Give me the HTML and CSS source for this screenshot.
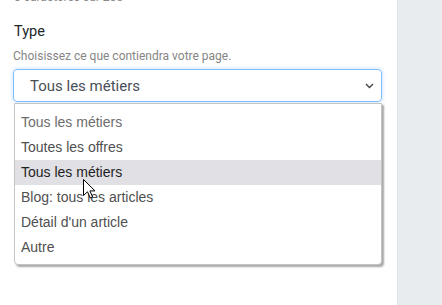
FILE: index.html
```html
<!DOCTYPE html>
<html>
<head>
  <title>Type de page</title>
  <link rel="stylesheet" href="styles.css">
</head>
<body>
  <div class="page">
    <div class="main">
      <p class="counter">0 caractères sur 255</p>
      <div class="form-group">
        <label class="field-label">Type</label>
        <p class="help">Choisissez ce que contiendra votre page.</p>
        <div class="select-wrap">
          <div class="select">
            <span>Tous les métiers</span>
            <svg class="chevron" width="9" height="6" viewBox="0 0 9 6">
              <path d="M1 1 L4.5 4.5 L8 1" fill="none" stroke="#444" stroke-width="1.4"/>
            </svg>
          </div>
          <ul class="options">
            <li class="muted">Tous les métiers</li>
            <li>Toutes les offres</li>
            <li class="hover">Tous les métiers</li>
            <li>Blog: tous les articles</li>
            <li>Détail d'un article</li>
            <li>Autre</li>
          </ul>
          <svg class="cursor" width="13" height="20" viewBox="0 0 13 20">
            <path d="M0.5 0.5 L0.5 16.5 L4.5 12.8 L7.3 19 L9.6 18 L6.9 11.9 L12 11.9 Z" fill="#fff" stroke="#000" stroke-width="1"/>
          </svg>
        </div>
      </div>
    </div>
    <div class="side"></div>
  </div>
</body>
</html>
```

FILE: styles.css
```css
html, body {
  margin: 0;
  height: 100%;
  overflow: hidden;
}
body {
  font-family: Roboto, "Liberation Sans", sans-serif;
  background: #fff;
}
.page {
  display: flex;
  height: 100%;
}
.main {
  width: 397px;
  padding: 0 15px 0 13px;
  box-sizing: border-box;
}
.side {
  flex: 1;
  background: #e9ecef;
  border-left: 1px solid #dfe3e7;
}
.counter {
  margin: -10px 0 0 1px;
  font-size: 12px;
  line-height: 14px;
  color: #8a8a8a;
}
.form-group {
  margin-top: 19px;
}
.field-label {
  display: block;
  font-size: 14.5px;
  line-height: 17px;
  color: #212529;
  margin-left: 1px;
}
.help {
  margin: 9px 0 0;
  font-size: 12px;
  line-height: 14px;
  color: #858585;
}
.select-wrap {
  position: relative;
  margin-top: 6px;
}
.select {
  display: flex;
  align-items: center;
  justify-content: space-between;
  height: 33px;
  padding: 0 7px 0 16px;
  border: 1px solid #80bdff;
  border-radius: 4px;
  box-shadow: 0 0 4px rgba(0, 123, 255, 0.25);
  box-sizing: border-box;
  font-size: 15px;
  color: #495057;
}
.chevron {
  margin-top: 1px;
}
.options {
  list-style: none;
  margin: 1px 0 0 1px;
  padding: 6px 0 4px;
  background: #fff;
  border: 1px solid #c4c4c4;
  border-radius: 0 0 4px 4px;
  box-shadow: 2px 2px 2px rgba(0, 0, 0, 0.35);
  font-family: "Liberation Sans", Arial, sans-serif;
  font-size: 14px;
  color: #505050;
}
.options li {
  height: 25px;
  line-height: 25px;
  padding-left: 6px;
}
.options li.muted {
  color: #6d6d6d;
}
.options li.hover {
  background: #e1e0e5;
  color: #1f1f1f;
}
.cursor {
  position: absolute;
  left: 70px;
  top: 110px;
}
```
